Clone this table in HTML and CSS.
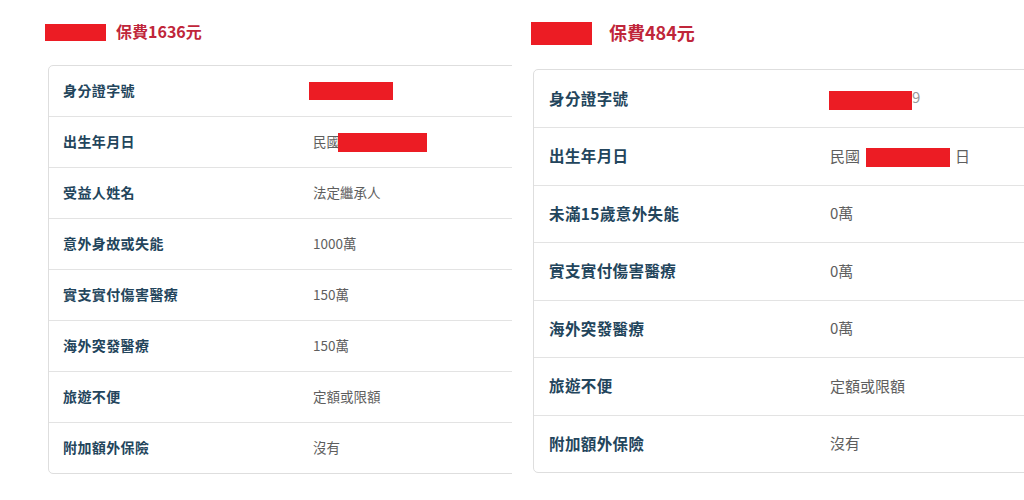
FILE: index.html
```html
<!DOCTYPE html>
<html lang="zh-Hant">
<head>
	<meta charset="UTF-8">
	<title>保費明細</title>
	<link rel="stylesheet" href="styles.css">
</head>
<body>
	<div class="page">
		<!-- 左邊：保費1636元 -->
		<div class="panel panel-left">
			<div class="title">
				<span class="mask mask-title"></span>
				<span class="price">保費1636元</span>
			</div>
			<div class="card">
				<div class="row"><div class="label">身分證字號</div><div class="value"><span class="mask mask-id"></span></div></div>
				<div class="row"><div class="label">出生年月日</div><div class="value">民國<span class="mask mask-date"></span></div></div>
				<div class="row"><div class="label">受益人姓名</div><div class="value">法定繼承人</div></div>
				<div class="row"><div class="label">意外身故或失能</div><div class="value">1000萬</div></div>
				<div class="row"><div class="label">實支實付傷害醫療</div><div class="value">150萬</div></div>
				<div class="row"><div class="label">海外突發醫療</div><div class="value">150萬</div></div>
				<div class="row"><div class="label">旅遊不便</div><div class="value">定額或限額</div></div>
				<div class="row"><div class="label">附加額外保險</div><div class="value">沒有</div></div>
			</div>
		</div>

		<!-- 右邊：保費484元 -->
		<div class="panel panel-right">
			<div class="title">
				<span class="mask mask-title"></span>
				<span class="price">保費484元</span>
			</div>
			<div class="card">
				<div class="row"><div class="label">身分證字號</div><div class="value"><span class="mask mask-id"></span><span class="tail">9</span></div></div>
				<div class="row"><div class="label">出生年月日</div><div class="value">民國<span class="mask mask-date"></span>日</div></div>
				<div class="row"><div class="label">未滿15歲意外失能</div><div class="value">0萬</div></div>
				<div class="row"><div class="label">實支實付傷害醫療</div><div class="value">0萬</div></div>
				<div class="row"><div class="label">海外突發醫療</div><div class="value">0萬</div></div>
				<div class="row"><div class="label">旅遊不便</div><div class="value">定額或限額</div></div>
				<div class="row"><div class="label">附加額外保險</div><div class="value">沒有</div></div>
			</div>
		</div>
	</div>
</body>
</html>
```

FILE: styles.css
```css
* {
	margin: 0;
	padding: 0;
	box-sizing: border-box;
}
body {
	background: #fff;
	font-family: "Noto Sans CJK TC", "Liberation Sans", sans-serif;
}
.page {
	display: flex;
	width: 1024px;
	height: 500px;
	overflow: hidden;
}
.panel {
	overflow: hidden;
}
.mask {
	display: inline-block;
	background: #ec1c24;
}
.price {
	color: #c0263a;
	font-weight: bold;
}
.card {
	border: 1px solid #dedede;
	border-radius: 5px;
	background: #fff;
}
.row {
	display: flex;
	align-items: center;
	padding-bottom: 2px;
	border-top: 1px solid #e3e3e3;
}
.row:first-child {
	border-top: none;
}
.label {
	color: #23455c;
	font-weight: bold;
}
.value {
	display: flex;
	align-items: center;
	color: #5e5e5e;
}

/* 左邊 */
.panel-left {
	width: 512px;
	flex: none;
	padding: 23px 0 0 45px;
}
.panel-left .title {
	display: flex;
	align-items: center;
	height: 18px;
}
.panel-left .mask-title {
	width: 61px;
	height: 17px;
	margin-right: 10px;
}
.panel-left .price {
	font-size: 16px;
	margin-top: -2px;
}
.panel-left .card {
	width: 500px;
	margin: 24px 0 0 3px;
}
.panel-left .row {
	height: 51px;
	padding-left: 14px;
}
.panel-left .row:first-child {
	height: 50px;
}
.panel-left .label {
	width: 250px;
	font-size: 14px;
	letter-spacing: 0.4px;
}
.panel-left .value {
	font-size: 13.5px;
}
.panel-left .mask-id {
	width: 84px;
	height: 18px;
	margin: 2px 0 0 -4px;
}
.panel-left .mask-date {
	width: 89px;
	height: 19px;
	margin: 2px 0 0 -2px;
}

/* 右邊 */
.panel-right {
	flex: 1;
	padding: 22px 0 0 19px;
}
.panel-right .title {
	display: flex;
	align-items: center;
	height: 23px;
}
.panel-right .mask-title {
	width: 61px;
	height: 23px;
	margin-right: 17px;
}
.panel-right .price {
	font-size: 18px;
	margin-top: -4px;
}
.panel-right .card {
	width: 520px;
	margin: 24px 0 0 2px;
}
.panel-right .row {
	height: 57.5px;
	padding-left: 15px;
}
.panel-right .row:first-child {
	height: 57px;
}
.panel-right .label {
	width: 281px;
	font-size: 15.5px;
	letter-spacing: 0.4px;
}
.panel-right .value {
	font-size: 15px;
}
.panel-right .mask-id {
	width: 83px;
	height: 19px;
	margin: 6px 0 0 -1px;
}
.panel-right .tail {
	color: #999;
	margin-top: -2px;
}
.panel-right .mask-date {
	width: 84px;
	height: 19px;
	margin: 4px 5px 0 6px;
}
```
